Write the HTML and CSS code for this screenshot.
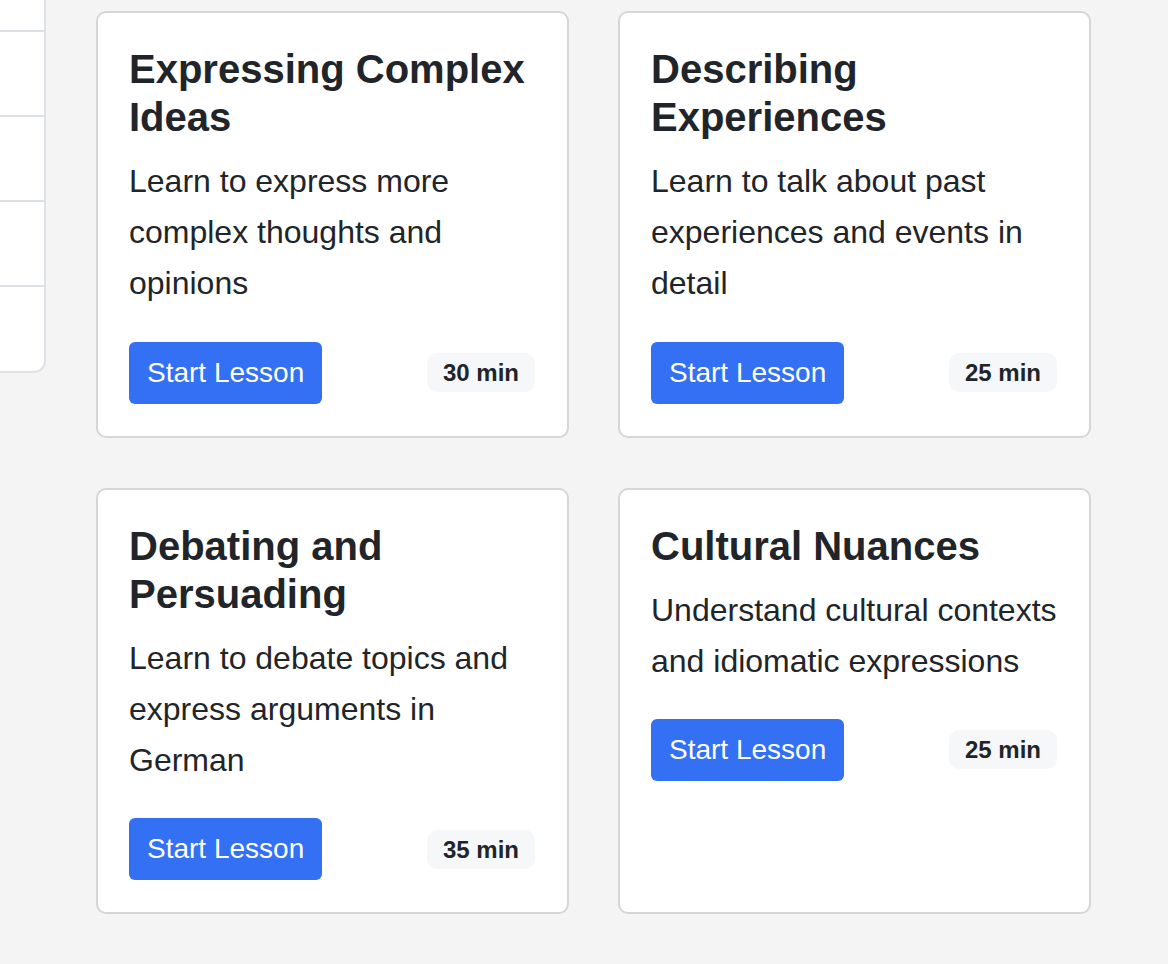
FILE: index.html
```html
<!DOCTYPE html>
<html lang="en">
<head>
<meta charset="utf-8">
<title>Lessons</title>
<link rel="stylesheet" href="styles.css">
</head>
<body>
<div class="layout">
  <aside class="sidebar">
    <div class="side-item first"></div>
    <div class="side-item"></div>
    <div class="side-item"></div>
    <div class="side-item"></div>
    <div class="side-item last"></div>
  </aside>
  <main class="grid">
    <article class="card">
      <h3 class="card-title">Expressing Complex Ideas</h3>
      <p class="card-text">Learn to express more complex thoughts and opinions</p>
      <div class="card-footer">
        <button class="btn">Start Lesson</button>
        <span class="badge">30 min</span>
      </div>
    </article>
    <article class="card">
      <h3 class="card-title">Describing Experiences</h3>
      <p class="card-text">Learn to talk about past experiences and events in detail</p>
      <div class="card-footer">
        <button class="btn">Start Lesson</button>
        <span class="badge">25 min</span>
      </div>
    </article>
    <article class="card">
      <h3 class="card-title">Debating and Persuading</h3>
      <p class="card-text">Learn to debate topics and express arguments in German</p>
      <div class="card-footer">
        <button class="btn">Start Lesson</button>
        <span class="badge">35 min</span>
      </div>
    </article>
    <article class="card">
      <h3 class="card-title">Cultural Nuances</h3>
      <p class="card-text">Understand cultural contexts and idiomatic expressions</p>
      <div class="card-footer">
        <button class="btn">Start Lesson</button>
        <span class="badge">25 min</span>
      </div>
    </article>
  </main>
</div>
</body>
</html>
```
FILE: styles.css
```css
* { box-sizing: border-box; }
html, body {
  margin: 0;
  padding: 0;
  background: #f4f4f4;
  font-family: "Liberation Sans", Arial, Helvetica, sans-serif;
  color: #212529;
}
.layout {
  display: flex;
  align-items: flex-start;
  gap: 50px;
}
.sidebar {
  width: 46px;
  flex: 0 0 46px;
  background: #ffffff;
  border-right: 2px solid #dee2e6;
  border-bottom: 2px solid #dee2e6;
  border-bottom-right-radius: 12px;
  display: flex;
  flex-direction: column;
}
.side-item {
  height: 85px;
  border-bottom: 2px solid #dee2e6;
}
.side-item.first { height: 32px; }
.side-item.last { height: 84px; border-bottom: none; }
.grid {
  margin-top: 11px;
  width: 995px;
  display: grid;
  grid-template-columns: 473px 473px;
  column-gap: 49px;
  row-gap: 50px;
  padding-bottom: 50px;
}
.card {
  background: #ffffff;
  border: 2px solid #d6d6d6;
  border-radius: 10px;
  padding: 32px 32px 32px 31px;
  display: flex;
  flex-direction: column;
}
.card-title {
  margin: 0 0 15px;
  font-size: 40px;
  line-height: 48px;
  font-weight: 700;
}
.card-text {
  margin: 0 0 32px;
  font-size: 32px;
  line-height: 1.6;
}
.card-footer {
  display: flex;
  justify-content: space-between;
  align-items: center;
}
.btn {
  font-family: inherit;
  font-size: 28px;
  line-height: 42px;
  padding: 10px 18px;
  color: #ffffff;
  background: #3370f3;
  border: none;
  border-radius: 6px;
}
.badge {
  font-size: 24px;
  font-weight: 700;
  line-height: 27px;
  padding: 6px 16px;
  background: #f6f7f9;
  border-radius: 10px;
  color: #212529;
}
```
